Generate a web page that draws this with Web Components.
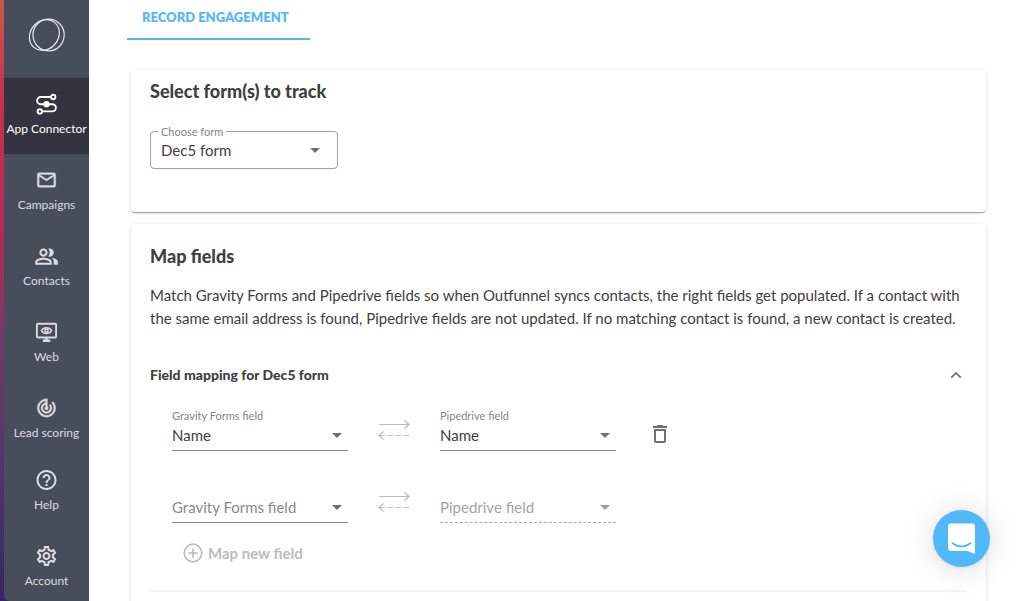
<!DOCTYPE html>
<html lang="en">
<head>
<meta charset="utf-8">
<meta name="viewport" content="width=device-width, initial-scale=1">
<title>App Connector</title>
<style>
  body { margin: 0; font-family: Lato, "Open Sans", sans-serif; color: #404040; background: #fff; }
</style>
</head>
<body>
<app-shell></app-shell>

<script>
const define = (name, html, setup) => {
  const template = document.createElement('template');
  template.innerHTML = html;
  customElements.define(name, class extends HTMLElement {
    constructor() {
      super();
      this.attachShadow({ mode: 'open' }).append(template.content.cloneNode(true));
    }
    connectedCallback() { if (setup) setup(this, this.shadowRoot); }
  });
};

/* Sidebar link: icon in the "icon" slot, label in the default slot */
define('nav-item', `
  <style>
    :host { display: block; flex: none; height: 76px; color: #dcdde0; }
    :host([active]) { background: #33343f; color: #fff; }
    a { display: flex; flex-direction: column; align-items: center; gap: 6px; padding-top: 15px;
        color: inherit; text-decoration: none; font-size: 12px; line-height: 16px; white-space: nowrap; }
    :host([compact]) a { padding-top: 11px; }
    ::slotted(svg) { display: block; width: 23px; height: 22px; }
  </style>
  <a href="#"><slot name="icon"></slot><span><slot></slot></span></a>`,
  (host, root) => { if (host.hasAttribute('active')) root.querySelector('a').setAttribute('aria-current', 'page'); });

define('side-nav', `
  <style>
    :host { display: flex; height: 100vh; overflow: hidden;
            background: linear-gradient(#c85a4c 0, #c9304f 16%, #b92a55 36%, #6f3a6c 58%, #55336c 78%, #35266c 100%); padding-left: 4px; box-sizing: border-box; }
    nav { flex: 1; display: flex; flex-direction: column; background: #484d5b; border-bottom-left-radius: 6px; }
    .logo { flex: none; height: 78px; display: flex; justify-content: center; align-items: center; }
    .logo svg { width: 38px; height: 38px; margin-bottom: 8px; }
  </style>
  <nav aria-label="Main">
    <div class="logo">
      <svg viewBox="0 0 38 38" fill="none" stroke="#e6e6e8" stroke-width="1.2" role="img" aria-label="Outfunnel">
        <ellipse cx="16.4" cy="19" rx="16.2" ry="14" transform="rotate(-50 16.4 19)"/>
        <ellipse cx="20.6" cy="19" rx="15.6" ry="15.9"/>
      </svg>
    </div>
    <nav-item active>
      <svg slot="icon" viewBox="0 0 22 22" fill="none" stroke="currentColor" stroke-width="1.9">
        <path d="M15.400 4H5.200a3.600 3.600 0 0 0 0 7.200h11.600a3.600 3.600 0 0 1 0 7.200H6.600"/>
        <circle cx="17.700" cy="4" r="2.200"/><circle cx="4.300" cy="18.400" r="2.200"/>
        <circle cx="11" cy="11.200" r="2.200" fill="currentColor"/>
      </svg>App Connector</nav-item>
    <nav-item>
      <svg slot="icon" viewBox="0 0 24 24" fill="currentColor" stroke="currentColor" stroke-width=".4"><path d="M22 6c0-1.100-.9-2-2-2H4c-1.100 0-2 .9-2 2v12c0 1.100.9 2 2 2h16c1.100 0 2-.9 2-2V6zm-2 0l-8 5-8-5h16zm0 12H4V8l8 5 8-5v10z"/></svg>Campaigns</nav-item>
    <nav-item>
      <svg slot="icon" viewBox="2 2 21 20" fill="currentColor"><path d="M16.670 13.130C18.040 14.060 19 15.320 19 17v3h4v-3c0-2.180-3.570-3.470-6.330-3.870zM15 12c2.210 0 4-1.790 4-4s-1.790-4-4-4c-.47 0-.91.1-1.330.24C14.500 5.270 15 6.580 15 8s-.5 2.730-1.330 3.760c.42.14.86.24 1.330.24zM9 12c2.210 0 4-1.790 4-4s-1.790-4-4-4-4 1.790-4 4 1.790 4 4 4zm0-6c1.100 0 2 .9 2 2s-.9 2-2 2-2-.9-2-2 .9-2 2-2zM9 13c-2.670 0-8 1.340-8 4v3h16v-3c0-2.660-5.330-4-8-4zm6 5H3v-.99C3.200 16.290 6.300 15 9 15s5.800 1.290 6 2v1z" transform="translate(1.300 1.300) scale(.94)"/></svg>Contacts</nav-item>
    <nav-item>
      <svg slot="icon" viewBox="0 0 24 24" fill="none" stroke="currentColor" stroke-width="2">
        <rect x="1.500" y="3" width="21" height="15" rx="1"/><path d="M8 21.500h8M12 18v3" stroke-width="2.600"/>
        <path d="M6.500 10.500c2.500-4.200 8.500-4.200 11 0-2.500 4.200-8.500 4.200-11 0z" stroke-width="1.700"/><circle cx="12" cy="10.500" r="1.700" stroke-width="1.700"/>
      </svg>Web</nav-item>
    <nav-item>
      <svg slot="icon" viewBox="0 0 24 24" fill="currentColor" stroke="currentColor" stroke-width=".3"><path d="M19.070 4.930l-1.410 1.410A8 8 0 1 1 11 4.070v2.020A6 6 0 1 0 16.240 7.760l-1.410 1.410A4 4 0 1 1 11 8.140v2.140a2 2 0 1 0 2 0V2h-1a10 10 0 1 0 7.070 2.930z"/></svg>Lead scoring</nav-item>
    <nav-item compact>
      <svg slot="icon" viewBox="1 1 22 22" fill="currentColor"><path d="M11 18h2v-2h-2v2zm1-16C6.480 2 2 6.480 2 12s4.480 10 10 10 10-4.480 10-10S17.520 2 12 2zm0 18c-4.410 0-8-3.590-8-8s3.590-8 8-8 8 3.590 8 8-3.590 8-8 8zm0-14c-2.210 0-4 1.790-4 4h2c0-1.100.9-2 2-2s2 .9 2 2c0 2-3 1.750-3 5h2c0-2.250 3-2.500 3-5 0-2.210-1.790-4-4-4z"/></svg>Help</nav-item>
    <nav-item compact>
      <svg slot="icon" viewBox="1 1 22 22" fill="currentColor"><path d="M19.430 12.980c.04-.32.07-.64.07-.98s-.03-.66-.07-.98l2.110-1.650c.19-.15.24-.42.12-.64l-2-3.460c-.09-.16-.26-.25-.44-.25-.06 0-.12.010-.17.030l-2.490 1c-.52-.4-1.080-.73-1.690-.98l-.38-2.650C14.460 2.180 14.250 2 14 2h-4c-.25 0-.46.18-.49.42l-.38 2.650c-.61.25-1.170.59-1.690.98l-2.490-1c-.06-.02-.12-.03-.18-.03-.17 0-.34.09-.43.25l-2 3.460c-.13.22-.07.49.12.64l2.110 1.650c-.04.32-.07.65-.07.98s.03.66.07.98l-2.110 1.650c-.19.15-.24.42-.12.64l2 3.460c.09.16.26.25.44.25.06 0 .12-.01.17-.03l2.490-1c.52.4 1.080.73 1.690.98l.38 2.650c.03.24.24.42.49.42h4c.25 0 .46-.18.49-.42l.38-2.650c.61-.25 1.170-.59 1.690-.98l2.490 1c.06.02.12.03.18.03.17 0 .34-.09.43-.25l2-3.460c.12-.22.07-.49-.12-.64l-2.110-1.650zm-1.980-1.710c.04.31.05.52.05.73s-.02.43-.05.73l-.14 1.130.89.7 1.080.84-.7 1.210-1.270-.51-1.040-.42-.9.68c-.43.32-.84.56-1.250.73l-1.060.43-.16 1.130-.2 1.350h-1.400l-.19-1.350-.16-1.130-1.060-.43c-.43-.18-.83-.41-1.230-.71l-.91-.7-1.060.43-1.270.51-.7-1.210 1.080-.84.89-.7-.14-1.130c-.03-.31-.05-.54-.05-.74s.02-.43.05-.73l.14-1.130-.89-.7-1.080-.84.7-1.210 1.270.51 1.040.42.9-.68c.43-.32.84-.56 1.250-.73l1.060-.43.16-1.130.2-1.350h1.390l.19 1.350.16 1.130 1.060.43c.43.18.83.41 1.230.71l.91.7 1.060-.43 1.270-.51.7 1.210-1.070.85-.89.7.14 1.130zM12 8c-2.210 0-4 1.790-4 4s1.790 4 4 4 4-1.790 4-4-1.790-4-4-4zm0 6c-1.100 0-2-.9-2-2s.9-2 2-2 2 .9 2 2-.9 2-2 2z"/></svg>Account</nav-item>
  </nav>`);

define('tab-link', `
  <style>
    :host { display: block; }
    a { display: block; padding: 8px 21px 12px 15px; border-bottom: 2px solid #54b9fa; color: #54b9fa;
        font-size: 13px; line-height: 18px; font-weight: 800; text-decoration: none; text-transform: uppercase; }
  </style>
  <a href="#" aria-current="page"><slot></slot></a>`);

define('paper-card', `
  <style>
    :host { display: block; padding: 0 19px; background: #fff; border-radius: 4px;
            box-shadow: 0 2px 1px -1px rgba(0,0,0,.26), 0 1px 1px rgba(0,0,0,.12), 0 1px 4px rgba(0,0,0,.13); }
  </style>
  <slot></slot>`);

/* Drop-down. Attributes: label, value, variant="outlined", disabled.
   With no value, the label itself is shown as the placeholder. */
define('select-field', `
  <style>
    :host { display: block; flex: none; width: 176px; }
    .box { position: relative; display: flex; flex-direction: column; }
    label { font-size: 11px; line-height: 16px; color: #858585; }
    select { appearance: none; display: block; width: 100%; height: 27px; margin: 0; padding: 0 24px 5px 0; border: 0;
             border-bottom: 1px solid #8c8c8c; border-radius: 0; background: none; outline: none;
             font: 15px/20px Lato, "Open Sans", sans-serif; color: #404040; opacity: 1; }
    svg { position: absolute; right: 6px; bottom: 13px; width: 10px; height: 5px; fill: #707070; pointer-events: none; }
    .empty label { visibility: hidden; }
    .empty select { color: #8a8a8a; }
    :host([disabled]) select { color: #a3a3a3; border-bottom: 1px dashed #a8a8a8; }
    :host([disabled]) svg { fill: #a0a0a0; }
    :host([variant=outlined]) { width: 188px; }
    :host([variant=outlined]) label { position: absolute; top: -7px; left: 8px; padding: 0 3px; background: #fff; }
    :host([variant=outlined]) select { height: 38px; padding: 0 24px 0 10px; border: 1px solid #a0a0a0; border-radius: 4px; }
    :host([variant=outlined]) svg { right: 18px; bottom: 16px; }
  </style>
  <div class="box">
    <label for="s"></label>
    <select id="s"><option></option></select>
    <svg viewBox="0 0 10 5" aria-hidden="true"><path d="M0 0h10L5 5z"/></svg>
  </div>`,
  (host, root) => {
    const label = host.getAttribute('label'), value = host.getAttribute('value');
    const select = root.querySelector('select');
    select.disabled = host.hasAttribute('disabled');
    root.querySelector('option').textContent = value || label;
    if (value) root.querySelector('label').textContent = label;
    else {
      select.setAttribute('aria-label', label);
      root.querySelector('label').textContent = '';
      root.querySelector('.box').classList.add('empty');
    }
  });

define('sync-arrows', `
  <style>:host { display: block; flex: none; } svg { display: block; width: 32px; height: 20px; }</style>
  <svg viewBox="0 0 32 20" fill="none" stroke="#bcbcbc" stroke-width="1.2" aria-hidden="true">
    <path d="M1 4.500h30M26.500 0.500l4.500 4-4.500 4"/>
    <path d="M5.500 11.500L1 15.500l4.500 4"/><path d="M2 15.500h30" stroke-dasharray="5 3"/>
  </svg>`);

define('mapping-row', `
  <style>
    :host { display: flex; align-items: center; gap: 30px; height: 43px; }
    ::slotted(select-field) { align-self: flex-end; }
    button { margin: 8px 0 0; padding: 0; width: 28px; height: 24px; border: 0; background: none; color: #707070; display: flex; justify-content: center; align-items: center; }
    svg { width: 24px; height: 24px; flex: none; fill: currentColor; }
    :host(:not([removable])) button { display: none; }
  </style>
  <slot name="source"></slot><sync-arrows></sync-arrows><slot name="target"></slot>
  <button type="button" aria-label="Delete mapping"><svg viewBox="0 0 24 24"><path d="M6 19c0 1.100.9 2 2 2h8c1.100 0 2-.9 2-2V7H6v12zM8 9h8v10H8V9zm7.500-5l-1-1h-5l-1 1H5v2h14V4z"/></svg></button>`);

define('add-button', `
  <style>
    button { display: flex; align-items: center; gap: 5px; margin: 0; padding: 0; border: 0; background: none; color: #bcbcbc;
             font: 700 15px/24px Lato, "Open Sans", sans-serif; }
    :host { display: block; }
    svg { width: 20px; height: 20px; }
  </style>
  <button type="button"><svg viewBox="0 0 20 20" fill="none" stroke="currentColor" stroke-width="1.700"><circle cx="10" cy="10" r="8.800"/><path d="M10 5.300v9.400M5.300 10h9.400"/></svg><slot></slot></button>`);

define('chat-launcher', `
  <style>
    :host { position: fixed; right: 34px; bottom: 34px; }
    button { display: block; width: 57px; height: 57px; margin: 0; padding: 0; border: 0; border-radius: 50%; background: #51b8fa;
             box-shadow: 0 1px 6px rgba(0,0,0,.06), 0 2px 32px rgba(0,0,0,.14); }
    svg { display: block; width: 57px; height: 57px; }
  </style>
  <button type="button" aria-label="Open chat"><svg viewBox="0 0 57 57">
    <path fill="#fff" d="M18 13.500h21a3 3 0 0 1 3 3V44l-7.500-3H18a3 3 0 0 1-3-3V16.500a3 3 0 0 1 3-3z"/>
    <path d="M19.500 33c5 4.500 13 4.500 18 0" fill="none" stroke="#51b8fa" stroke-width="1.800" stroke-linecap="round"/>
  </svg></button>`);

define('app-shell', `
  <style>
    :host { display: grid; grid-template-columns: 89px minmax(0, 1fr); height: 100vh; overflow: hidden; }
    main { padding: 0 38px; height: 100vh; box-sizing: border-box; overflow: hidden; }
    .tabs { display: flex; margin-bottom: 30px; }
    .cards { display: flex; flex-direction: column; gap: 12px; padding-left: 4px; }
    .forms { padding-top: 9px; padding-bottom: 43px; }
    .map { padding-top: 20px; padding-bottom: 40px; }
    h2 { margin: 0; font-size: 18px; line-height: 24px; font-weight: 900; }
    .forms h2 { margin-bottom: 28px; }
    p { margin: 16px 0 33px; font-size: 15px; line-height: 23px; }
    .section { display: flex; align-items: center; justify-content: space-between; padding-right: 1px; }
    h3 { margin: 0; font-size: 14px; line-height: 24px; font-weight: 900; }
    .toggle { display: flex; margin: 0; padding: 0; border: 0; background: none; color: #757575; }
    .toggle svg { width: 20px; height: 20px; }
    .rows { display: flex; flex-direction: column; gap: 29px; margin: 21px 0 18px; padding-left: 22px; }
    add-button { padding-left: 33px; }
    hr { margin: 25px 0 0; border: 0; height: 2px; background: #f4f4f4; }
  </style>
  <side-nav></side-nav>
  <main>
    <div class="tabs"><tab-link>Record engagement</tab-link></div>
    <div class="cards">
      <paper-card class="forms">
        <h2>Select form(s) to track</h2>
        <select-field variant="outlined" label="Choose form" value="Dec5 form"></select-field>
      </paper-card>
      <paper-card class="map">
        <h2>Map fields</h2>
        <p>Match Gravity Forms and Pipedrive fields so when Outfunnel syncs contacts, the right fields get populated. If a contact with the same email address is found, Pipedrive fields are not updated. If no matching contact is found, a new contact is created.</p>
        <div class="section">
          <h3>Field mapping for Dec5 form</h3>
          <button class="toggle" type="button" aria-label="Collapse" aria-expanded="true"><svg viewBox="0 0 24 24" fill="currentColor"><path d="M12 8l-6.500 6.500 1.500 1.500 5-5 5 5 1.500-1.500z"/></svg></button>
        </div>
        <div class="rows">
          <mapping-row removable>
            <select-field slot="source" label="Gravity Forms field" value="Name"></select-field>
            <select-field slot="target" label="Pipedrive field" value="Name"></select-field>
          </mapping-row>
          <mapping-row>
            <select-field slot="source" label="Gravity Forms field"></select-field>
            <select-field slot="target" label="Pipedrive field" disabled></select-field>
          </mapping-row>
        </div>
        <add-button>Map new field</add-button>
        <hr>
      </paper-card>
    </div>
  </main>
  <chat-launcher></chat-launcher>`);
</script>
</body>
</html>
